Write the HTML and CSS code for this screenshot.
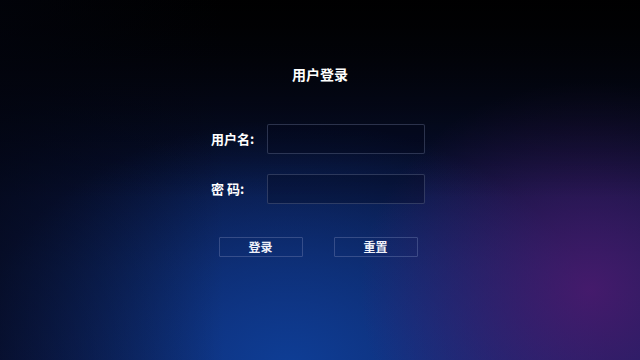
FILE: index.html
```html
<!DOCTYPE html>
<html lang="zh-CN">
<head>
    <meta charset="UTF-8">
    <meta name="viewport" content="width=device-width, initial-scale=1.0">
    <title>用户登录</title>
    <link rel="stylesheet" href="styles.css">
</head>
<body>
    <div class="page">
        <h1 class="title">用户登录</h1>
        <form class="login-form" action="#" method="post">
            <div class="row">
                <label for="username">用户名:</label>
                <input type="text" id="username" name="username">
            </div>
            <div class="row">
                <label for="password">密 码:</label>
                <input type="password" id="password" name="password">
            </div>
            <div class="actions">
                <button type="submit">登录</button>
                <button type="reset">重置</button>
            </div>
        </form>
    </div>
</body>
</html>
```

FILE: styles.css
```css
html, body {
    margin: 0;
    height: 100%;
}
body {
    font-family: "Noto Sans CJK SC", "Noto Sans", sans-serif;
    color: #ffffff;
    background-color: #03040c;
    background-image:
        linear-gradient(90deg, rgba(2, 4, 14, 0.6) 0%, rgba(2, 4, 14, 0) 35%),
        linear-gradient(180deg, rgba(0, 0, 0, 0.9) 0%, rgba(0, 0, 0, 0.6) 18%, rgba(0, 0, 0, 0) 55%),
        radial-gradient(ellipse 230px 210px at 590px 290px, rgba(78, 26, 112, 0.85), rgba(78, 26, 112, 0) 100%),
        radial-gradient(ellipse 320px 250px at 290px 370px, rgba(14, 62, 150, 1), rgba(14, 62, 150, 0) 100%),
        linear-gradient(180deg, #020308 0%, #071033 45%, #0d1c50 75%, #10205f 100%);
    overflow: hidden;
}
.page {
    display: flex;
    flex-direction: column;
    align-items: center;
    padding-top: 63px;
}
.title {
    margin: 0 0 39px 0;
    font-size: 14px;
    line-height: 22px;
    font-weight: bold;
}
.login-form {
    width: 214px;
    margin-right: 4px;
    display: flex;
    flex-direction: column;
    gap: 20px;
}
.row {
    display: flex;
    align-items: center;
}
label {
    width: 56px;
    font-size: 13px;
    line-height: 16px;
    font-weight: bold;
    white-space: pre;
}
input {
    width: 158px;
    height: 30px;
    box-sizing: border-box;
    background: rgba(4, 8, 28, 0.3);
    border: 1px solid rgba(105, 115, 150, 0.4);
    border-radius: 2px;
    color: #fff;
    padding: 0 6px;
    outline: none;
}
.actions {
    display: flex;
    justify-content: center;
    gap: 31px;
    margin-top: 13px;
}
button {
    width: 84px;
    height: 20px;
    box-sizing: border-box;
    background: transparent;
    border: 1px solid rgba(105, 120, 170, 0.45);
    border-radius: 1px;
    color: #eef0f8;
    font-family: inherit;
    font-size: 12px;
    font-weight: bold;
    line-height: 18px;
    padding: 0;
    cursor: pointer;
}
```
